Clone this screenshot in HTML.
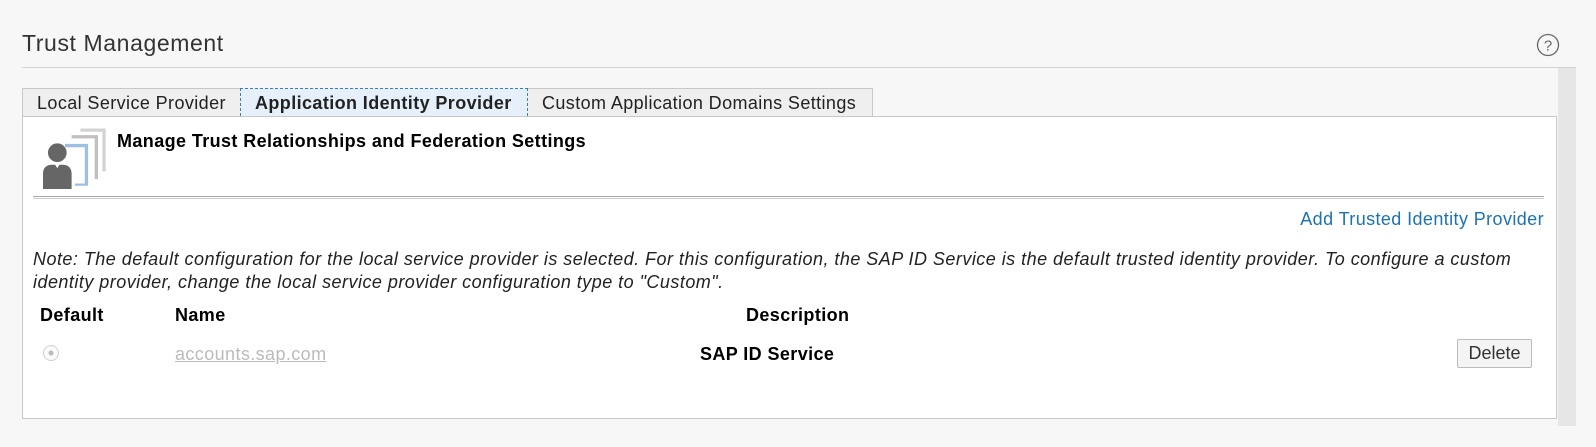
<!DOCTYPE html>
<html><head><meta charset="utf-8"><style>
body{margin:0;width:1596px;height:447px;background:#f7f7f7;font-family:"Liberation Sans",Arial,sans-serif;color:#000;position:relative;overflow:hidden;font-size:18px;letter-spacing:0.4px}
.a{position:absolute;white-space:nowrap}
.tab{position:absolute;top:88px;height:28px;border:1px solid #c8c8c8;border-bottom:none;background:#efefef;line-height:28px;font-size:18px;color:#222;box-sizing:border-box;padding-left:14px}
</style></head><body>
<div class="a" style="left:22px;top:30px;font-size:23px;letter-spacing:0.6px;color:#333">Trust Management</div>
<svg class="a" style="left:1536px;top:33px" width="24" height="24"><circle cx="12" cy="12" r="10.5" fill="none" stroke="#666" stroke-width="1.3"/><text x="12" y="17.5" text-anchor="middle" font-size="15" fill="#666" font-family="Liberation Sans" letter-spacing="0">?</text></svg>
<div class="a" style="left:22px;top:67px;width:1554px;height:1px;background:#d4d4d4"></div>
<div class="a" style="left:1558px;top:68px;width:18px;height:358px;background:#e6e6e6"></div>
<div class="tab" style="left:22px;width:219px">Local Service Provider</div>
<div class="tab" style="left:240px;width:288px;background:#e5f0fa;border:1px dashed #3c7fb1;border-bottom:none;font-weight:bold;z-index:2">Application Identity Provider</div>
<div class="tab" style="left:527px;width:346px">Custom Application Domains Settings</div>
<div class="a" style="left:22px;top:116px;width:1535px;height:303px;background:#fff;border:1px solid #c8c8c8;box-sizing:border-box"></div>
<svg class="a" style="left:0;top:0" width="120" height="200">
<g transform="translate(43 189) scale(1.1) translate(-43 -186)">
<path d="M77 131h23v39h-3V134h-20z" fill="#d3d3d3"/>
<path d="M69 137h24v40h-3V140h-21z" fill="#c0c0c0"/>
<path d="M63 145h21v38h-12v-2h9V148h-18z" fill="#9dbfe0"/>
<circle cx="56" cy="153" r="8.5" fill="#666"/>
<path d="M43 186v-14c0-5 3-8 8-8h3l2 3 2-3h3c5 0 8 3 8 8v14z" fill="#666"/>
</g>
</svg>
<div class="a" style="left:117px;top:131px;font-weight:bold;font-size:18px">Manage Trust Relationships and Federation Settings</div>
<div class="a" style="left:33px;top:196px;width:1511px;height:3px;border-top:1px solid #aaa;border-bottom:1px solid #ccc;box-sizing:border-box"></div>
<div class="a" style="right:52px;top:209px;color:#1b73b3">Add Trusted Identity Provider</div>
<div class="a" style="left:33px;top:248px;font-style:italic;line-height:23px;color:#222;letter-spacing:0.47px">Note: The default configuration for the local service provider is selected. For this configuration, the SAP ID Service is the default trusted identity provider. To configure a custom<br>identity provider, change the local service provider configuration type to "Custom".</div>
<div class="a" style="left:40px;top:305px;font-weight:bold">Default</div>
<div class="a" style="left:175px;top:305px;font-weight:bold">Name</div>
<div class="a" style="left:746px;top:305px;font-weight:bold">Description</div>
<svg class="a" style="left:42px;top:344px" width="18" height="18"><circle cx="9" cy="9" r="7.5" fill="#fafafa" stroke="#d0d0d0"/><circle cx="9" cy="9" r="2.5" fill="#bbb"/></svg>
<div class="a" style="left:175px;top:344px;color:#bbb;text-decoration:underline">accounts.sap.com</div>
<div class="a" style="left:700px;top:344px;font-weight:bold">SAP ID Service</div>
<div class="a" style="left:1457px;top:339px;width:75px;height:29px;border:1px solid #bbb;border-radius:2px;background:#f4f4f4;box-sizing:border-box;text-align:center;line-height:27px;color:#333;letter-spacing:0">Delete</div>
</body></html>
